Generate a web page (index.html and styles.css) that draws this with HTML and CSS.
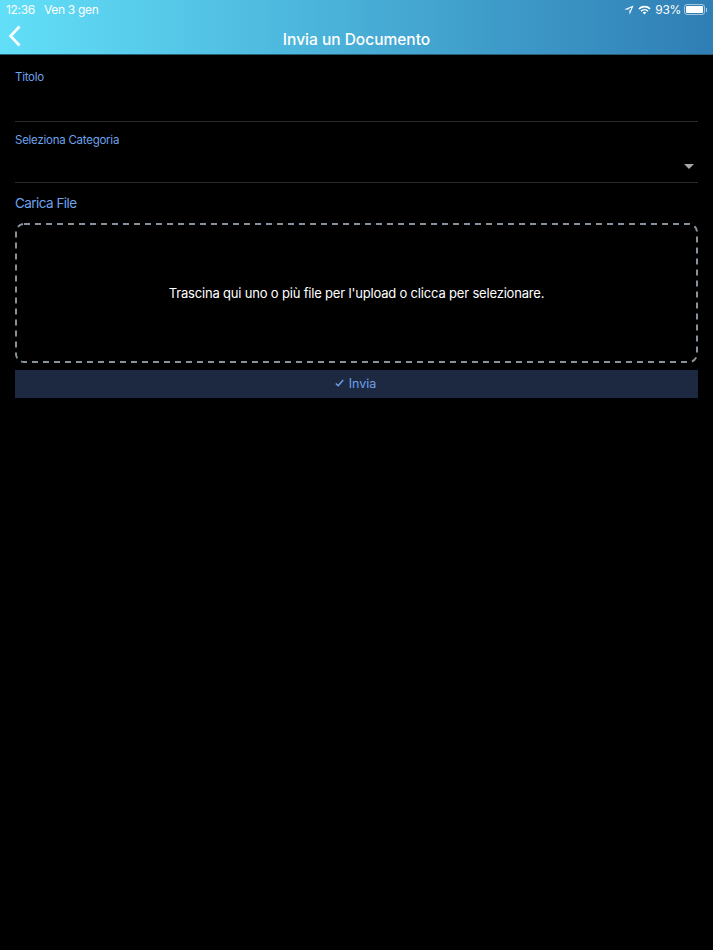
FILE: index.html
```html
<!DOCTYPE html>
<html lang="it">
<head>
<meta charset="utf-8">
<title>Invia un Documento</title>
<link rel="stylesheet" href="styles.css">
</head>
<body>
<header class="appbar">
  <div class="status">
    <div class="status-left"><span>12:36</span><span>Ven 3 gen</span></div>
    <div class="status-right">
      <svg class="ico-loc" width="10" height="10" viewBox="0 0 10 10"><path d="M9.600.4 .4 4.300l4.500.8.800 4.500zM7.600 2.400 5.600 7l-.3-2.300L3 4.400z" fill="#fff" fill-rule="evenodd"/></svg>
      <svg class="ico-wifi" width="13" height="10" viewBox="0 0 13 10"><path d="M.4 3.200a8.800 8.800 0 0 1 12.200 0l-1.100 1.200a7.200 7.200 0 0 0-10 0zM2.500 5.500a5.800 5.800 0 0 1 8 0L9.400 6.700a4.200 4.200 0 0 0-5.800 0zM4.600 7.600a2.800 2.800 0 0 1 3.800 0L6.500 9.600z" fill="#fff"/></svg>
      <span class="percent">93%</span>
      <span class="battery"><span class="battery-fill"></span></span><span class="battery-tip"></span>
    </div>
  </div>
  <div class="nav">
    <svg class="back" width="14" height="22" viewBox="0 0 14 22"><path d="M11.500 1.500 2.500 11 11.500 20.500" fill="none" stroke="#fff" stroke-width="2.600"/></svg>
    <h1 class="title">Invia un Documento</h1>
  </div>
</header>
<main class="form">
  <div class="field field-title">
    <label class="label">Titolo</label>
  </div>
  <div class="field field-select">
    <label class="label">Seleziona Categoria</label>
    <span class="caret"></span>
  </div>
  <h2 class="section">Carica File</h2>
  <div class="dropzone">
    <svg class="dash" width="683" height="140"><rect x="1" y="1" width="681" height="138" rx="8" ry="8" fill="none" stroke="#87929c" stroke-width="2" stroke-dasharray="6 5"/></svg>
    <span>Trascina qui uno o più file per l'upload o clicca per selezionare.</span>
  </div>
  <button class="submit" type="button">
    <svg width="9" height="8" viewBox="0 0 9 8"><path d="M.8 4.400 3.200 6.800 8.200 1" fill="none" stroke="#6ea2ec" stroke-width="1.400"/></svg>
    <span>Invia</span>
  </button>
</main>
</body>
</html>
```
FILE: styles.css
```css
* { box-sizing: border-box; }
html, body { margin: 0; height: 100%; background: #000; }
body { font-family: Inter, "Liberation Sans", sans-serif; color: #fff; overflow: hidden; }
.appbar {
  height: 55px;
  background: linear-gradient(90deg, #62dff8 0%, #2f7eb5 100%);
  border-bottom: 1px solid #2c5a70;
  display: flex;
  flex-direction: column;
}
.status {
  height: 19px;
  padding: 0 6px 0 6px;
  display: flex;
  justify-content: space-between;
  align-items: center;
  font-size: 12px;
  letter-spacing: -.32px;
  color: #fff;
}
.status-left { display: flex; gap: 9px; }
.status-right { display: flex; align-items: center; gap: 4px; }
.percent { margin-right: -1px; }
.battery {
  width: 21px; height: 11px;
  border: 1px solid rgba(255,255,255,.55);
  border-radius: 3px;
  padding: 1px;
  display: flex;
}
.battery-fill { flex: 1; background: #fff; border-radius: 1px; }
.battery-tip { width: 1px; height: 4px; background: rgba(255,255,255,.6); margin-left: -3px; }
.nav {
  flex: 1;
  display: flex;
  align-items: center;
  justify-content: center;
  position: relative;
}
.back { position: absolute; left: 8px; top: 6px; }
.title { margin: 5px 0 0; font-size: 15.500px; font-weight: 500; color: #fff; }
.form { padding: 0 15px; }
.label { display: block; font-size: 11.500px; letter-spacing: -.25px; line-height: 14px; color: #6ea2ec; }
.field { border-bottom: 1px solid #2b2b2b; position: relative; }
.field-title { height: 67px; padding-top: 15px; }
.field-select { height: 61px; padding-top: 11px; }
.caret {
  position: absolute;
  right: 4.500px;
  top: 42px;
  border-left: 5px solid transparent;
  border-right: 5px solid transparent;
  border-top: 5px solid #a8a8a8;
}
.section { margin: 12px 0 12px; font-size: 13.500px; letter-spacing: -.55px; line-height: 16px; font-weight: 400; color: #6ea2ec; }
.dropzone {
  height: 140px;
  position: relative;
  display: flex;
  align-items: center;
  justify-content: center;
  font-size: 13px;
  letter-spacing: -.18px;
  color: #fff;
}
.dash { position: absolute; left: 0; top: 0; }
.submit {
  width: 100%;
  height: 28px;
  margin-top: 7px;
  padding: 0 2px 2px 0;
  border: 0;
  background: #1d2940;
  color: #6ea2ec;
  font: inherit;
  font-size: 12.500px;
  display: flex;
  align-items: center;
  justify-content: center;
  gap: 5px;
}
```
